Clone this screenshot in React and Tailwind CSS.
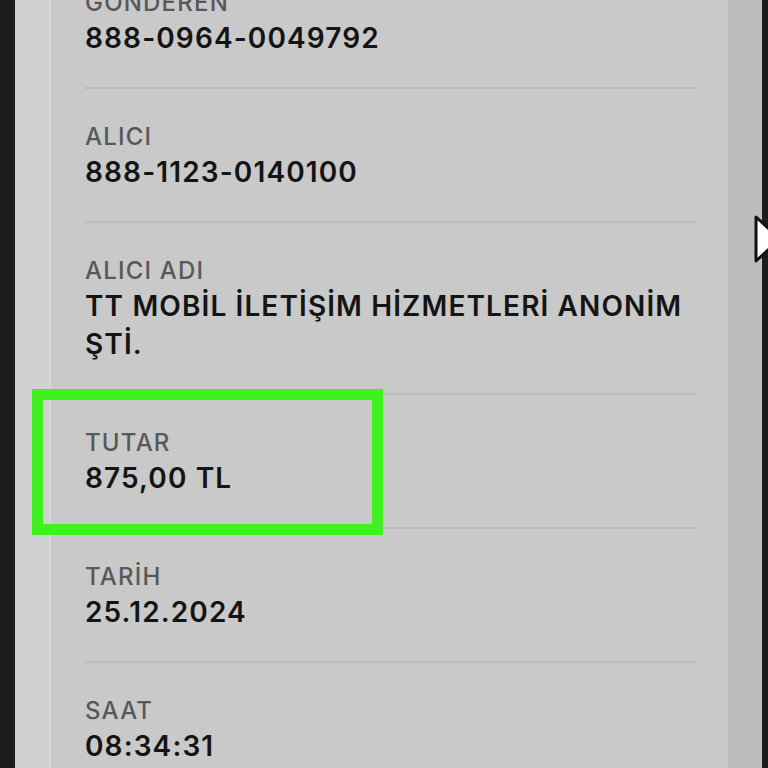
const rows = [
  { label: 'GÖNDEREN', value: ['888-0964-0049792'] },
  { label: 'ALICI', value: ['888-1123-0140100'] },
  { label: 'ALICI ADI', value: ['TT MOBİL İLETİŞİM HİZMETLERİ ANONİM', 'ŞTİ.'] },
  { label: 'TUTAR', value: ['875,00 TL'] },
  { label: 'TARİH', value: ['25.12.2024'] },
  { label: 'SAAT', value: ['08:34:31'] },
];

function DetailRow({ label, value }) {
  return (
    <div className="pt-[32px] pb-[30px] border-b-2 border-[#bcbcbc]">
      <p className="h-[32px] leading-[32px] text-[24px] font-medium text-[#585858] tracking-[0.05em]">{label}</p>
      {value.map((line) => (
        <p key={line} className="h-[38px] leading-[38px] text-[28px] font-semibold text-[#141414] tracking-[0.04em] whitespace-nowrap">
          {line}
        </p>
      ))}
    </div>
  );
}

export default function App() {
  return (
    <div
      className="relative w-[768px] h-[768px] overflow-hidden flex bg-[#1c1c1c]"
      style={{ fontFamily: 'Inter, "Noto Sans", sans-serif' }}
    >
      <div className="w-[15px] shrink-0 bg-[#1c1c1c]" />
      <div className="w-[36px] shrink-0 bg-[#d0d0d0] border-r-2 border-[#d6d6d6]" />
      <div className="flex-1 bg-[#c9c9c9] pl-[34px] pr-[31px]">
        <div className="-mt-[45px]">
          {rows.map((r) => (
            <DetailRow key={r.label} label={r.label} value={r.value} />
          ))}
        </div>
      </div>
      <div className="w-[34px] shrink-0 bg-[#bdbdbd]" />
      <div className="w-[6px] shrink-0 bg-[#1c1c1c]" />

      <div className="absolute left-[32px] top-[389px] w-[351px] h-[146px] border-[11px] border-[#3ff21f]" />

      <svg className="absolute left-[753px] top-[214px]" width="30" height="50" viewBox="0 0 30 50">
        <path d="M3 3 L3 47 L27 25 Z" fill="#ffffff" stroke="#111111" strokeWidth="3" strokeLinejoin="round" />
      </svg>
    </div>
  );
}
